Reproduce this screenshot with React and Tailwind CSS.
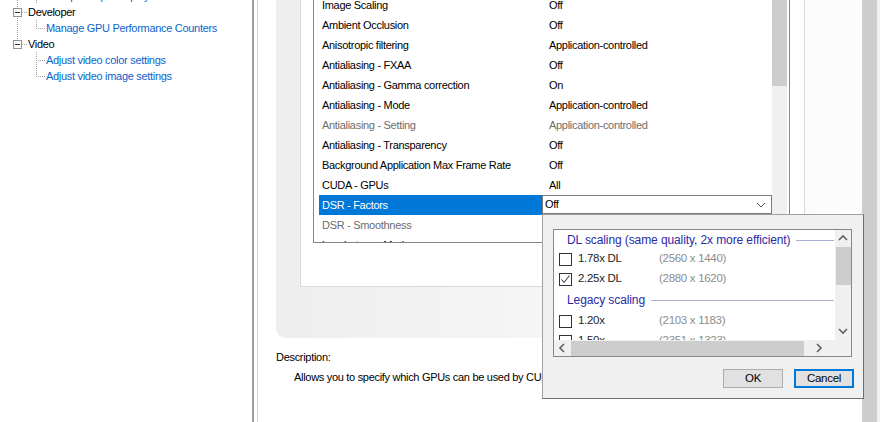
import React from 'react';

const settings = [
  { name: 'Image Scaling', value: 'Off' },
  { name: 'Ambient Occlusion', value: 'Off' },
  { name: 'Anisotropic filtering', value: 'Application-controlled' },
  { name: 'Antialiasing - FXAA', value: 'Off' },
  { name: 'Antialiasing - Gamma correction', value: 'On' },
  { name: 'Antialiasing - Mode', value: 'Application-controlled' },
  { name: 'Antialiasing - Setting', value: 'Application-controlled', disabled: true },
  { name: 'Antialiasing - Transparency', value: 'Off' },
  { name: 'Background Application Max Frame Rate', value: 'Off' },
  { name: 'CUDA - GPUs', value: 'All' },
  { name: 'DSR - Factors', value: 'Off', selected: true },
  { name: 'DSR - Smoothness', value: '33%', disabled: true },
  { name: 'Low Latency Mode', value: 'Off' },
];

const dlFactors = [
  { label: '1.78x DL', res: '(2560 x 1440)', checked: false },
  { label: '2.25x DL', res: '(2880 x 1620)', checked: true },
];

const legacyFactors = [
  { label: '1.20x', res: '(2103 x 1183)', checked: false },
  { label: '1.50x', res: '(2351 x 1323)', checked: false },
];

// tree connector drawing for the left navigation
function Gutter({ kind, last, parentLast }) {
  const dot = { stroke: '#a0a0a0', strokeDasharray: '1 1', strokeWidth: 1 };
  if (kind === 'node') {
    return (
      <svg width="28" height="16" className="shrink-0">
        <line x1="17.5" y1="0" x2="17.5" y2={last ? 4 : 16} {...dot} />
        <line x1="22" y1="8.5" x2="28" y2="8.5" {...dot} />
        <rect x="13.5" y="4.5" width="8" height="8" fill="#fff" stroke="#919191" />
        <line x1="15" y1="8.5" x2="20" y2="8.5" stroke="#333" />
      </svg>
    );
  }
  return (
    <svg width="46" height="16" className="shrink-0">
      {!parentLast && <line x1="17.5" y1="0" x2="17.5" y2="16" {...dot} />}
      <line x1="36.5" y1="0" x2="36.5" y2={last ? 9 : 16} {...dot} />
      <line x1="38" y1="8.5" x2="46" y2="8.5" {...dot} />
    </svg>
  );
}

function TreeRow({ kind, label, last, parentLast }) {
  return (
    <div className="h-[16px] shrink-0 flex items-center whitespace-nowrap">
      <Gutter kind={kind} last={last} parentLast={parentLast} />
      <span className={kind === 'node' ? 'text-black' : 'text-[#0b63ce]'}>{label}</span>
    </div>
  );
}

function Checkbox({ checked }) {
  return (
    <div className="w-[13px] h-[13px] border border-[#333] bg-white shrink-0 flex items-center justify-center">
      {checked && (
        <svg width="11" height="11" viewBox="0 0 11 11">
          <polyline points="1.5,5.5 4,8.5 9.5,1.5" fill="none" stroke="#444" strokeWidth="1.1" />
        </svg>
      )}
    </div>
  );
}

function GroupHeader({ text, h }) {
  return (
    <div className={`${h} shrink-0 flex items-center pl-[13px] pr-[1px]`}>
      <span className="text-[#2a2aa5] text-[12px] tracking-[-0.1px] whitespace-nowrap">{text}</span>
      <div className="flex-1 h-px bg-[#a9afd0] ml-[6px]" />
    </div>
  );
}

function FactorRow({ f }) {
  return (
    <div className="h-[20px] shrink-0 flex items-center pl-[5px] whitespace-nowrap text-[11.5px]">
      <Checkbox checked={f.checked} />
      <span className="ml-[6px] w-[81px] text-[#1e1e1e]">{f.label}</span>
      <span className="text-[#8c8c8c]">{f.res}</span>
    </div>
  );
}

function Chevron({ dir }) {
  const pts = {
    up: '1,6 5,2 9,6',
    down: '1,2 5,6 9,2',
    left: '6,1 2,5 6,9',
    right: '2,1 6,5 2,9',
  }[dir];
  return (
    <svg width="10" height="10" viewBox="0 0 10 10">
      <polyline points={pts} fill="none" stroke="#606060" strokeWidth="1.6" />
    </svg>
  );
}

export default function App() {
  return (
    <div className="relative w-[880px] h-[422px] overflow-hidden flex bg-white font-['Liberation_Sans',Arial,sans-serif] text-[11px] tracking-[-0.3px] text-black">
      {/* left navigation tree */}
      <div className="w-[252px] shrink-0 bg-white flex flex-col -mt-[12px]">
        <TreeRow kind="leaf" label="Set up multiple displays" parentLast={false} />
        <TreeRow kind="node" label="Developer" />
        <TreeRow kind="leaf" label="Manage GPU Performance Counters" last parentLast={false} />
        <TreeRow kind="node" label="Video" last />
        <TreeRow kind="leaf" label="Adjust video color settings" parentLast />
        <TreeRow kind="leaf" label="Adjust video image settings" last parentLast />
      </div>
      <div className="w-[2px] bg-[#a0a0a0] shrink-0" />
      <div className="w-[3px] bg-white shrink-0" />
      <div className="w-[1px] bg-[#d8d8d8] shrink-0" />

      {/* main settings area */}
      <div className="flex-1 flex flex-col bg-white">
        <div className="ml-[18px] h-[338px] rounded-bl-[10px] bg-gradient-to-r from-[#eeeeee] via-[#f6f6f6] to-[#fdfdfd] flex flex-col">
          <div className="ml-[24px] w-[505px] h-[287px] bg-white border-x border-b border-[#dadada]">
            <div className="ml-[12px] w-[477px] h-[243px] border-x border-b border-[#828790] flex overflow-hidden">
              <div className="w-[458px] flex flex-col -mt-[5px] pl-[5px]">
                {settings.map((s) => (
                  <div key={s.name} className="h-[20px] shrink-0 flex items-stretch whitespace-nowrap">
                    <div
                      className={`w-[223px] pl-[3px] flex items-center ${
                        s.selected ? 'bg-[#0078d7] text-white' : s.disabled ? 'text-[#6d6d6d]' : 'text-black'
                      }`}
                    >
                      {s.name}
                    </div>
                    {s.selected ? (
                      <div className="flex-1 h-[19px] border border-[#7a7a7a] bg-white flex items-center pl-[2px] pr-[5px]">
                        <span className="flex-1">{s.value}</span>
                        <svg width="10" height="6" viewBox="0 0 10 6">
                          <polyline points="1,1 5,5 9,1" fill="none" stroke="#555" strokeWidth="1" />
                        </svg>
                      </div>
                    ) : (
                      <div className={`flex-1 pl-[7px] flex items-center ${s.disabled ? 'text-[#6d6d6d]' : ''}`}>
                        {s.value}
                      </div>
                    )}
                  </div>
                ))}
              </div>
              <div className="w-[17px] flex">
                <div className="w-[15px] flex flex-col">
                  <div className="h-[86px] bg-[#cdcdcd]" />
                  <div className="flex-1 bg-[#f0f0f0]" />
                </div>
              </div>
            </div>
          </div>
        </div>
        <div className="mt-[11px] ml-[18px] leading-[16px]">Description:</div>
        <div className="mt-[4px] ml-[36px] leading-[16px] whitespace-nowrap">
          Allows you to specify which GPUs can be used by CUDA applications.
        </div>
      </div>

      {/* outer scrollbar */}
      <div className="w-[18px] shrink-0 flex bg-[#f0f0f0]">
        <div className="w-[15px] bg-[#cdcdcd]" />
      </div>

      {/* DSR factors dropdown */}
      <div className="absolute left-[542px] top-[214px] w-[322px] h-[185px] bg-[#f0f0f0] border border-[#a0a0a0] border-r-[#6e6e6e] border-b-[#6e6e6e] flex flex-col">
        <div className="ml-[10px] mt-[14px] w-[299px] h-[128px] shrink-0 border border-[#828790] bg-white flex flex-col">
          <div className="h-[110px] shrink-0 flex">
            <div className="w-[281px] flex flex-col overflow-hidden">
              <div className="h-[1px] shrink-0" />
              <GroupHeader text="DL scaling (same quality, 2x more efficient)" h="h-[18px]" />
              {dlFactors.map((f) => (
                <FactorRow key={f.label} f={f} />
              ))}
              <GroupHeader text="Legacy scaling" h="h-[22px]" />
              {legacyFactors.map((f) => (
                <FactorRow key={f.label} f={f} />
              ))}
            </div>
            <div className="w-[16px] bg-[#f0f0f0] flex flex-col items-center">
              <div className="h-[17px] flex items-center justify-center">
                <Chevron dir="up" />
              </div>
              <div className="w-[15px] h-[38px] bg-[#cdcdcd]" />
              <div className="flex-1" />
              <div className="h-[17px] flex items-center justify-center">
                <Chevron dir="down" />
              </div>
            </div>
          </div>
          <div className="flex-1 flex">
            <div className="w-[281px] bg-[#f0f0f0] flex items-center">
              <div className="w-[17px] flex items-center justify-center">
                <Chevron dir="left" />
              </div>
              <div className="w-[233px] h-[15px] bg-[#cdcdcd]" />
              <div className="flex-1 flex items-center justify-center">
                <Chevron dir="right" />
              </div>
            </div>
            <div className="flex-1 bg-[#f0f0f0]" />
          </div>
        </div>
        <div className="mt-[12px] mr-[9px] flex justify-end gap-[11px]">
          <button className="w-[60px] h-[19px] bg-[#e1e1e1] border border-[#adadad] text-[11.5px] leading-none">OK</button>
          <button className="w-[60px] h-[19px] bg-[#e1e1e1] border-2 border-[#0078d7] text-[11.5px] leading-none">Cancel</button>
        </div>
      </div>
    </div>
  );
}
